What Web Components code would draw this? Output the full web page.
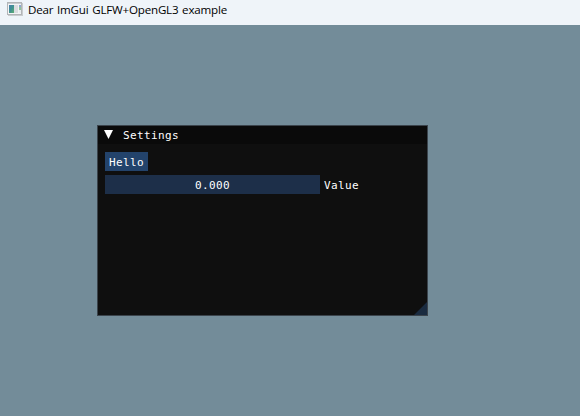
<!DOCTYPE html>
<html lang="en">
<head>
<meta charset="utf-8">
<title>Dear ImGui GLFW+OpenGL3 example</title>
<style>html,body{margin:0;width:100%;height:100%;overflow:hidden}</style>
</head>
<body>
<app-frame caption="Dear ImGui GLFW+OpenGL3 example">
  <im-window caption="Settings">
    <im-button>Hello</im-button>
    <im-slider value="0.000">Value</im-slider>
  </im-window>
</app-frame>
<script>
class Base extends HTMLElement {
  connectedCallback() {
    if (!this.shadowRoot) this.attachShadow({mode: "open"}).innerHTML = this.view();
  }
}
customElements.define("app-frame", class extends Base {
  view() { return `<style>
    :host{display:flex;flex-direction:column;width:580px;height:416px;background:#738c99}
    header{height:25px;flex:none;box-sizing:border-box;background:#eff4f9;display:flex;align-items:flex-start;padding:1px 0 0 7px;gap:5px;color:#000;font:11.6px/18px "Open Sans","Noto Sans",sans-serif;white-space:pre}
    header span{letter-spacing:-0.2px;word-spacing:.9px}
    svg{display:block;flex:none;margin-top:1px}
    main{flex:1;padding:100px 0 0 97px}
    </style><header><svg width="16" height="14" shape-rendering="crispEdges">
      <defs><linearGradient id="g" x1="0" y1="0" x2="1" y2="1"><stop offset="0" stop-color="#4a7fb0"/><stop offset=".5" stop-color="#3f9290"/><stop offset="1" stop-color="#62ad72"/></linearGradient></defs>
      <path fill="#b2b5b8" d="M0 0h15v13H0z"/><path fill="#c9cccf" d="M15 1h1v13H1v-1h14z"/>
      <path fill="#f3f4f5" d="M1 2h13v10H1z"/><path fill="#c9cccf" d="M1 1h13v1H1z"/>
      <path fill="url(#g)" d="M2 3h5v8H2z"/><path fill="#dadcdf" d="M7 3h1v8H7zM8 3h3v8H8z"/>
      <path fill="#8fa8d0" d="M12 3h2v2h-2z"/><path fill="#8fc69d" d="M12 5h2v3h-2z"/><path fill="#e9edf0" d="M12 8h2v3h-2z"/>
    </svg><span>${this.getAttribute("caption")}</span></header><main><slot></slot></main>`; }
});
customElements.define("im-window", class extends Base {
  view() { return `<style>
    :host{display:flex;flex-direction:column;position:relative;box-sizing:border-box;width:331px;height:191px;background:#0f0f0f;border:1px solid #3b444c;color:#fff;font:11px/21px "DejaVu Sans Mono",monospace;letter-spacing:.378px}
    header{height:18px;flex:none;background:#0a0a0a;display:flex;align-items:flex-start;padding-left:6px;gap:10px}
    header svg{display:block;flex:none;margin-top:4px}
    header span{line-height:19px}
    section{display:flex;flex-direction:column;align-items:flex-start;gap:4px;padding:8px 7px}
    .grip{position:absolute;right:0;bottom:0;display:block}
    </style><header><svg width="9" height="9"><path fill="#fff" d="M0 0H9L4.5 9z"/></svg><span>${this.getAttribute("caption")}</span></header>
    <section><slot></slot></section>
    <svg class="grip" width="13" height="13"><path fill="#1a2b40" d="M13 0V13H0z"/></svg>`; }
});
customElements.define("im-button", class extends Base {
  view() { return `<style>:host{display:block;height:19px;padding:0 4px;background:#23436b}</style><slot></slot>`; }
});
customElements.define("im-slider", class extends Base {
  view() { return `<style>:host{display:flex;gap:4px;height:19px}
    .track{width:215px;background:#1d2f49;text-align:center}</style>
    <div class="track">${this.getAttribute("value")}</div><slot></slot>`; }
});
</script>
</body>
</html>
